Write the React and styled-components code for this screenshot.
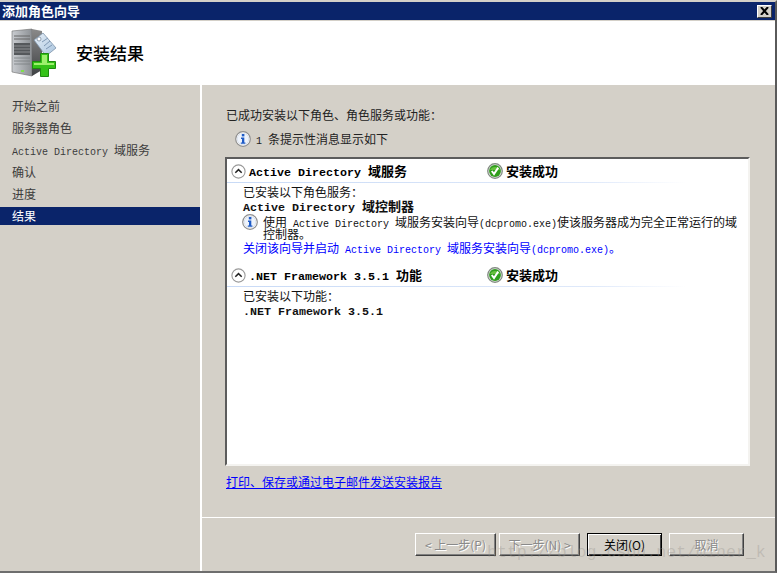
import React from "react";
import styled, { createGlobalStyle } from "styled-components";

const CJK = `"Noto Sans CJK SC", "Liberation Sans", sans-serif`;

const Global = createGlobalStyle`
  html, body { margin: 0; padding: 0; background: #d4d0c8; }
  * { box-sizing: border-box; }
`;

const Win = styled.div`
  position: relative;
  width: 777px;
  height: 573px;
  display: flex;
  flex-direction: column;
  background: #d4d0c8;
  font-family: ${CJK};
  font-size: 12px;
  color: #000;
  overflow: hidden;
  border-top: 2px solid #d4d0c8;
  border-right: 2px solid #5a5a5a;
  border-bottom: 2px solid #6e6e6e;
`;
const TitleBar = styled.div`
  height: 18px;
  flex: none;
  background: #0a246a;
  color: #fff;
  font-size: 13px;
  font-weight: 700;
  line-height: 18px;
  padding: 0 3px 0 2px;
  display: flex;
  align-items: center;
  justify-content: space-between;
`;
const CloseBtn = styled.div`
  width: 15px;
  height: 13px;
  background: #d4d0c8;
  border: 1px solid;
  border-color: #fff #404040 #404040 #fff;
  display: flex;
  align-items: center;
  justify-content: center;
`;
const Banner = styled.div`
  height: 64px;
  flex: none;
  margin-top: 1px;
  background: #fff;
  display: flex;
  align-items: center;
  padding-left: 11px;
`;
const BannerTitle = styled.div`
  margin-left: 19px;
  font-size: 17px;
  font-weight: 500;
  line-height: 24px;
`;
const Body = styled.div`
  flex: 1;
  min-height: 0;
  display: flex;
`;
const Sidebar = styled.div`
  width: 202px;
  flex: none;
  border-right: 2px solid #fff;
  padding-top: 12px;
  display: flex;
  flex-direction: column;
  gap: 4px;
`;
const NavItem = styled.div`
  height: 18px;
  line-height: 18px;
  padding-left: 12px;
  white-space: pre;
  color: ${(p) => (p.$active ? "#fff" : "#3c3c3c")};
  background: ${(p) => (p.$active ? "#0a246a" : "transparent")};
`;
const Main = styled.div`
  flex: 1;
  min-width: 0;
  display: flex;
  flex-direction: column;
`;
const Content = styled.div`
  flex: 1;
  min-height: 0;
  padding: 22px 0 0 23px;
  display: flex;
  flex-direction: column;
`;
const Line = styled.div`
  height: 16px;
  line-height: 16px;
  padding-left: 1px;
  white-space: pre;
  color: #222;
`;
const NoticeRow = styled.div`
  margin-top: 8px;
  margin-left: 10px;
  height: 16px;
  line-height: 16px;
  display: flex;
  align-items: center;
  gap: 5px;
  white-space: pre;
  color: #222;
`;
const ResultBox = styled.div`
  margin-top: 10px;
  width: 525px;
  height: 309px;
  flex: none;
  background: #fff;
  border: 2px solid;
  border-color: #5c5c5c #f4f3f0 #f4f3f0 #5c5c5c;
  padding-top: 1px;
`;
const GroupHead = styled.div`
  height: 23px;
  display: flex;
  align-items: center;
  padding-left: 4px;
  border-bottom: 1px solid transparent;
  border-image: linear-gradient(90deg, #c8daf6 0%, #dfe9fa 70%, #ffffff 88%) 1;
  font-weight: 700;
  font-size: 13px;
  white-space: pre;
`;
const GroupName = styled.div`
  margin: 0 0 2px 3px;
  width: 238px;
`;
const Status = styled.div`
  display: flex;
  align-items: center;
  gap: 3px;
`;
const StatusText = styled.span`
  margin-bottom: 2px;
`;
const GroupBody = styled.div`
  padding-left: 16px;
  padding-top: 1px;
  padding-bottom: ${(p) => p.$pb || 0}px;
`;
const Row = styled.div`
  height: 15px;
  line-height: ${(p) => (p.$bold ? 13 : 15)}px;
  white-space: pre;
  color: ${(p) => (p.$link ? "#0000ff" : "#111")};
  font-weight: ${(p) => (p.$bold ? 700 : 400)};
  font-size: ${(p) => (p.$bold ? 13 : 12)}px;
`;
const NoteRow = styled.div`
  display: flex;
  align-items: flex-start;
  gap: 5px;
  margin-left: -1px;
`;
const NoteText = styled.div`
  line-height: 12px;
  padding-top: 2px;
  width: 478px;
  height: 26px;
  color: #111;
`;
const Lat = styled.span`
  font-family: "Liberation Mono", monospace;
  font-size: 10px;
  line-height: 0;
`;
const BLat = styled.span`
  font-family: "Liberation Mono", monospace;
  font-size: 11.67px;
  font-weight: 700;
  line-height: 0;
`;
const ReportLink = styled.a`
  margin-top: 8px;
  margin-left: 1px;
  height: 16px;
  line-height: 16px;
  color: #0000ff;
  text-decoration: underline;
`;
const Footer = styled.div`
  height: 54px;
  flex: none;
  border-top: 1px solid #fff;
  padding: 15px 31px 0 0;
  display: flex;
  justify-content: flex-end;
  align-items: flex-start;
`;
const Btn = styled.div`
  width: ${(p) => p.$w}px;
  height: 23px;
  margin-left: ${(p) => p.$ml || 0}px;
  display: flex;
  align-items: center;
  justify-content: center;
  white-space: pre;
  background: #d4d0c8;
  color: ${(p) => (p.$disabled ? "#8a8a8a" : "#000")};
  text-shadow: ${(p) => (p.$disabled ? "1px 1px 0 #fff" : "none")};
  border: 1px solid;
  border-color: ${(p) => (p.$default ? "#000" : "#fff #404040 #404040 #fff")};
  box-shadow: ${(p) =>
    p.$default
      ? "inset 1px 1px 0 #fff, inset -1px -1px 0 #404040"
      : "inset -1px -1px 0 #808080"};
`;
const Watermark = styled.div`
  position: absolute;
  left: 487px;
  top: 541px;
  font-family: "Liberation Mono", monospace;
  font-size: 16.6px;
  line-height: 20px;
  color: rgba(150, 146, 140, 0.34);
  white-space: pre;
  pointer-events: none;
`;

const XIcon = () => (
  <svg width="9" height="8" viewBox="0 0 9 8">
    <path d="M1 0 L8 8 M8 0 L1 8" stroke="#000" strokeWidth="2" fill="none" />
  </svg>
);

const InfoIcon = () => (
  <svg width="16" height="16" viewBox="0 0 16 16" style={{ flex: "none" }}>
    <circle cx="8" cy="8" r="7.3" fill="#fff" stroke="#8e8e8e" strokeWidth="1.2" />
    <circle cx="8" cy="8" r="5.8" fill="#eef3fb" stroke="#c9d3e3" strokeWidth="0.6" />
    <rect x="6.8" y="3" width="2.6" height="2.4" fill="#1e5bc6" />
    <path d="M6 6.6 H9.3 V11.4 H10.4 V12.8 H5.8 V11.4 H7 V8 H6 Z" fill="#1e5bc6" />
  </svg>
);

const CheckIcon = () => (
  <svg width="16" height="16" viewBox="0 0 16 16" style={{ flex: "none" }}>
    <circle cx="8" cy="8" r="7.3" fill="#dcdcdc" stroke="#7f8a7f" strokeWidth="1.2" />
    <circle cx="8" cy="8" r="5.9" fill="#2f9e1c" />
    <path d="M3 7 A5.5 5 0 0 1 13 7 Z" fill="#7fd04f" opacity="0.7" />
    <path d="M4.8 8 L7 11 L11.2 4.6" stroke="#fff" strokeWidth="2" fill="none" />
  </svg>
);

const ChevronIcon = () => (
  <svg width="15" height="15" viewBox="0 0 15 15" style={{ flex: "none" }}>
    <circle cx="7.5" cy="7.5" r="6.6" fill="#fff" stroke="#9a9a9a" strokeWidth="1.1" />
    <path d="M4.3 8.8 L7.5 5.6 L10.7 8.8" stroke="#222" strokeWidth="1.5" fill="none" />
  </svg>
);

const ServerIcon = () => (
  <svg width="46" height="50" viewBox="0 0 46 50" style={{ flex: "none" }}>
    <defs>
      <linearGradient id="srvFront" x1="0" x2="1" y1="0" y2="0">
        <stop offset="0" stopColor="#c9ccd0" />
        <stop offset="1" stopColor="#8c9094" />
      </linearGradient>
      <linearGradient id="srvSide" x1="0" x2="0" y1="0" y2="1">
        <stop offset="0" stopColor="#8a8a8a" />
        <stop offset="1" stopColor="#3f4144" />
      </linearGradient>
      <linearGradient id="tagFill" x1="0" x2="1" y1="0" y2="1">
        <stop offset="0" stopColor="#e8f0f8" />
        <stop offset="1" stopColor="#a9c4de" />
      </linearGradient>
    </defs>
    <path d="M1 3 L21 1 L21 48 L1 44 Z" fill="url(#srvFront)" stroke="#6b6b6b" strokeWidth="0.6" />
    <path d="M21 1 L31 3 L31 42 L21 48 Z" fill="url(#srvSide)" />
    <path d="M3 8 H19 M3 11 H19" stroke="#666" strokeWidth="1" />
    <rect x="3" y="15" width="16" height="12" fill="#55585b" />
    <path d="M3 18 H19 M3 21 H19 M3 24 H19" stroke="#9a9da0" strokeWidth="0.8" />
    <path d="M3 30 H19 M3 33 H19 M3 36 H19" stroke="#7a7d80" strokeWidth="0.8" />
    <rect x="10" y="42" width="3" height="2" fill="#7fe04a" />
    <path d="M23 12 L32 5 L45 20 L35 28 Z" fill="url(#tagFill)" stroke="#7e93aa" strokeWidth="0.8" />
    <circle cx="28" cy="11" r="2" fill="#fff" stroke="#6e7f92" strokeWidth="0.7" />
    <path d="M31 14 L37 10 M33 18 L39 13 M35 21 L41 17" stroke="#7f98b4" strokeWidth="1" />
    <path
      d="M29.5 25.5 H37.5 V33.5 H44.5 V40.5 H37.5 V48.5 H29.5 V40.5 H21.5 V33.5 H29.5 Z"
      fill="#35c218"
      stroke="#1e8a0e"
      strokeWidth="1"
    />
    <path d="M31 27 H36 V35 H43 V37 H31 Z M23 35 H31 V37 H23 Z" fill="#9df06c" />
  </svg>
);

export default function App() {
  return (
    <Win>
      <Global />
      <TitleBar>
        添加角色向导
        <CloseBtn>
          <XIcon />
        </CloseBtn>
      </TitleBar>
      <Banner>
        <ServerIcon />
        <BannerTitle>安装结果</BannerTitle>
      </Banner>
      <Body>
        <Sidebar>
          <NavItem>开始之前</NavItem>
          <NavItem>服务器角色</NavItem>
          <NavItem>
            <Lat>Active Directory </Lat>域服务
          </NavItem>
          <NavItem>确认</NavItem>
          <NavItem>进度</NavItem>
          <NavItem $active>结果</NavItem>
        </Sidebar>
        <Main>
          <Content>
            <Line>已成功安装以下角色、角色服务或功能：</Line>
            <NoticeRow>
              <InfoIcon />
              <span>
                <Lat>1 </Lat>条提示性消息显示如下
              </span>
            </NoticeRow>
            <ResultBox>
              <GroupHead>
                <ChevronIcon />
                <GroupName>
                  <BLat>Active Directory </BLat>域服务
                </GroupName>
                <Status>
                  <CheckIcon />
                  <StatusText>安装成功</StatusText>
                </Status>
              </GroupHead>
              <GroupBody $pb={9}>
                <Row>已安装以下角色服务：</Row>
                <Row $bold>
                  <BLat>Active Directory </BLat>域控制器
                </Row>
                <NoteRow>
                  <InfoIcon />
                  <NoteText>
                    使用<Lat> Active Directory </Lat>域服务安装向导
                    <Lat>(dcpromo.exe)</Lat>使该服务器成为完全正常运行的域控制器。
                  </NoteText>
                </NoteRow>
                <Row $link>
                  关闭该向导并启动<Lat> Active Directory </Lat>域服务安装向导
                  <Lat>(dcpromo.exe)</Lat>。
                </Row>
              </GroupBody>
              <GroupHead>
                <ChevronIcon />
                <GroupName>
                  <BLat>.NET Framework 3.5.1 </BLat>功能
                </GroupName>
                <Status>
                  <CheckIcon />
                  <StatusText>安装成功</StatusText>
                </Status>
              </GroupHead>
              <GroupBody>
                <Row>已安装以下功能：</Row>
                <Row $bold>
                  <BLat>.NET Framework 3.5.1</BLat>
                </Row>
              </GroupBody>
            </ResultBox>
            <ReportLink href="#">打印、保存或通过电子邮件发送安装报告</ReportLink>
          </Content>
          <Footer>
            <Btn $w={81} $disabled>
              {"< 上一步(P)"}
            </Btn>
            <Btn $w={81} $ml={3} $disabled>
              {"下一步(N) >"}
            </Btn>
            <Btn $w={75} $ml={7} $default>
              关闭(O)
            </Btn>
            <Btn $w={75} $ml={7} $disabled>
              取消
            </Btn>
          </Footer>
        </Main>
      </Body>
      <Watermark>http://blog.csdn.net/miner_k</Watermark>
    </Win>
  );
}
